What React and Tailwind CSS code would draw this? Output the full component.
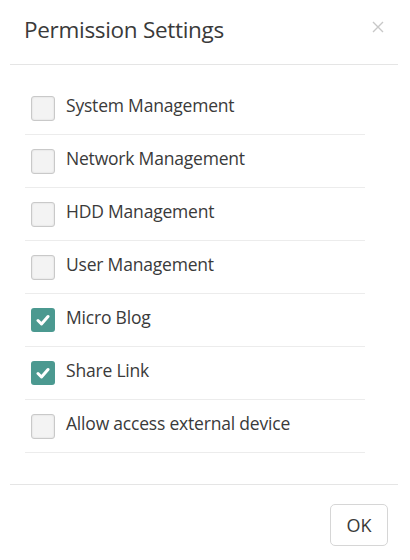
import React from "react";

const items = [
  { label: "System Management", checked: false },
  { label: "Network Management", checked: false },
  { label: "HDD Management", checked: false },
  { label: "User Management", checked: false },
  { label: "Micro Blog", checked: true },
  { label: "Share Link", checked: true },
  { label: "Allow access external device", checked: false },
];

function Box({ checked }) {
  if (checked) {
    return (
      <div className="w-[24px] h-[24px] rounded-[3px] bg-[#4b9990] flex items-center justify-center shrink-0">
        <svg width="14" height="12" viewBox="0 0 14 12">
          <path d="M2 6.5 L5.5 10 L12 2.5" fill="none" stroke="white" strokeWidth="3" strokeLinecap="round" strokeLinejoin="round" />
        </svg>
      </div>
    );
  }
  return (
    <div className="w-[24px] h-[25px] rounded-[3px] bg-[#f3f3f3] border border-[#c9c9c9] shadow-[inset_0_0_2px_rgba(0,0,0,0.12)] shrink-0" />
  );
}

export default function App() {
  return (
    <div className="w-[410px] h-[560px] bg-white text-[#333]" style={{ fontFamily: '"Open Sans", "Noto Sans", sans-serif' }}>
      <div className="h-[64px] flex items-center justify-between pl-[24px] pr-[26px] pb-[5px]">
        <span className="text-[22.5px] tracking-[-0.3px] text-[#3a3a3a]">Permission Settings</span>
        <svg width="12" height="12" viewBox="0 0 12 12" className="mt-[-5px]">
          <path d="M1 1 L11 11 M11 1 L1 11" stroke="#c8c8c8" strokeWidth="1.4" />
        </svg>
      </div>
      <div className="h-px bg-[#e5e5e5] ml-[10px] mr-[12px]" />
      <div className="pt-[17px] pl-[25px] pr-[45px] pb-[31px]">
        {items.map((it) => (
          <div key={it.label} className="h-[53px] border-b border-[#ececec] flex items-center pl-[6px] gap-[11px]">
            <Box checked={it.checked} />
            <span className="text-[17.5px] text-[#3a3a3a] tracking-[-0.2px] mb-[5px]">{it.label}</span>
          </div>
        ))}
      </div>
      <div className="h-px bg-[#e5e5e5] ml-[10px] mr-[12px]" />
      <div className="flex justify-end pr-[22px] pt-[19px]">
        <button className="w-[58px] h-[42px] rounded-[5px] border border-[#d6d6d6] bg-white text-[18px] text-[#3a3a3a]">
          OK
        </button>
      </div>
    </div>
  );
}
